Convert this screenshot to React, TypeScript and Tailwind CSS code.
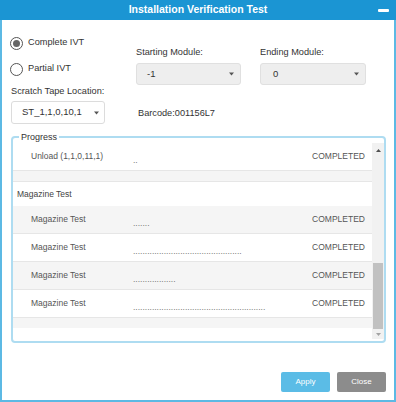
import React from "react";

const font = { fontFamily: '"Liberation Sans", Arial, sans-serif' };

function Caret({ color = "#555" }: { color?: string }) {
  return (
    <svg width="5" height="4" viewBox="0 0 5 4">
      <path d="M0 0.5 L5 0.5 L2.5 3.5 Z" fill={color} />
    </svg>
  );
}

function Radio({ checked, label }: { checked: boolean; label: string }) {
  return (
    <div className="flex h-[16px] items-center">
      <div className="ml-[-1px] flex h-[13px] w-[13px] items-center justify-center rounded-full border border-[#555] bg-white">
        {checked && <div className="h-[7px] w-[7px] rounded-full bg-[#666]" />}
      </div>
      <span className="ml-[5px] text-[9.2px] text-[#333]">{label}</span>
    </div>
  );
}

type Row = { label: string; dots: number; status: string; bg: string };

const rows: Row[] = [
  { label: "Magazine Test", dots: 7, status: "COMPLETED", bg: "bg-[#f5f5f5]" },
  { label: "Magazine Test", dots: 46, status: "COMPLETED", bg: "bg-white" },
  { label: "Magazine Test", dots: 18, status: "COMPLETED", bg: "bg-[#f5f5f5]" },
  { label: "Magazine Test", dots: 56, status: "COMPLETED", bg: "bg-white" },
];

function ProgressRow({ label, dots, status, bg }: Row) {
  return (
    <div className={`flex h-[28px] items-center border-b border-[#e6e6e6] pl-[18px] text-[8.5px] text-[#555] ${bg}`}>
      <span className="w-[102px] shrink-0">{label}</span>
      <span className="flex-1 translate-y-[4px] overflow-hidden whitespace-nowrap tracking-[0px] text-[#777]">
        {".".repeat(dots)}
      </span>
      <span className="w-[60px] shrink-0 pr-[7px] text-right">{status}</span>
    </div>
  );
}

export default function App() {
  return (
    <div className="flex h-[402px] w-[396px] flex-col bg-white" style={font}>
      <div className="relative flex h-[20px] shrink-0 items-center justify-center bg-[#1b95d3]">
        <span className="text-[10.5px] font-bold text-white">Installation Verification Test</span>
        <div className="absolute right-[7px] top-[9px] h-[3px] w-[11px] rounded-[1px] bg-white" />
      </div>
      <div className="flex flex-1 flex-col border-x-2 border-b-2 border-[#5cb9e4] pl-[9px] pr-[8px]">
        <div className="flex h-[111px] shrink-0">
          <div className="flex w-[125px] shrink-0 flex-col pt-[15px]">
            <Radio checked label="Complete IVT" />
            <div className="mt-[10px]">
              <Radio checked={false} label="Partial IVT" />
            </div>
            <div className="mt-[7px] h-[14px] text-[9.2px] leading-[14px] text-[#333]">Scratch Tape Location:</div>
            <div className="mt-[3px] flex h-[23px] w-[94px] items-center justify-between rounded-[3px] border border-[#dcdcdc] bg-white pl-[10px] pr-[5px] text-[9.5px] text-[#333]">
              <span>ST_1,1,0,10,1</span>
              <Caret />
            </div>
          </div>
          <div className="flex flex-col pt-[25px]">
            <div className="flex gap-[19px]">
              <div className="flex flex-col">
                <div className="h-[14px] text-[9.2px] leading-[14px] text-[#333]">Starting Module:</div>
                <div className="mt-[4px] flex h-[22px] w-[105px] items-center justify-between rounded-[3px] border border-[#e0e0e0] bg-[#eeeeee] pl-[10px] pr-[6px] text-[9.5px] text-[#333]">
                  <span>-1</span>
                  <Caret />
                </div>
              </div>
              <div className="flex flex-col">
                <div className="h-[14px] text-[9.2px] leading-[14px] text-[#333]">Ending Module:</div>
                <div className="mt-[4px] flex h-[22px] w-[106px] items-center justify-between rounded-[3px] border border-[#e0e0e0] bg-[#eeeeee] pl-[12px] pr-[6px] text-[9.5px] text-[#333]">
                  <span>0</span>
                  <Caret />
                </div>
              </div>
            </div>
            <div className="ml-[2px] mt-[21px] h-[14px] text-[9.2px] leading-[14px] text-[#333]">Barcode:001156L7</div>
          </div>
        </div>

        <fieldset className="h-[212px] w-[375px] shrink-0 rounded-[4px] border-2 border-[#aedcf1]">
          <legend className="ml-[6px] px-[2px] text-[9px] leading-[12px] text-[#333]">Progress</legend>
          <div className="flex h-[196px]">
            <div className="flex flex-1 flex-col overflow-hidden">
              <div className="flex h-[28px] items-center border-b border-[#e6e6e6] bg-white pl-[18px] text-[8.5px] text-[#555]">
                <span className="w-[102px] shrink-0">Unload (1,1,0,11,1)</span>
                <span className="flex-1 translate-y-[4px] text-[#777]">..</span>
                <span className="w-[60px] shrink-0 pr-[7px] text-right">COMPLETED</span>
              </div>
              <div className="h-[11px] border-b border-[#e6e6e6] bg-[#f5f5f5]" />
              <div className="flex h-[24px] items-center bg-white pl-[4px] text-[8.5px] text-[#444]">Magazine Test</div>
              {rows.map((r, i) => (
                <ProgressRow key={i} {...r} />
              ))}
              <div className="h-[10px] bg-[#f5f5f5]" />
            </div>
            <div className="flex w-[12px] shrink-0 flex-col bg-[#f1f1f1]">
              <div className="flex h-[14px] items-center justify-center">
                <svg width="5" height="3" viewBox="0 0 5 3">
                  <path d="M0 3 L5 3 L2.5 0 Z" fill="#505050" />
                </svg>
              </div>
              <div className="h-[106px]" />
              <div className="mx-[1px] h-[66px] bg-[#c1c1c1]" />
              <div className="flex h-[10px] items-center justify-center">
                <svg width="5" height="3" viewBox="0 0 5 3">
                  <path d="M0 0 L5 0 L2.5 3 Z" fill="#a3a3a3" />
                </svg>
              </div>
            </div>
          </div>
        </fieldset>

        <div className="mt-[29px] flex justify-end gap-[7px]">
          <button className="h-[20px] w-[49px] rounded-[2px] bg-[#5bbce6] text-[8px] text-white">Apply</button>
          <button className="h-[20px] w-[49px] rounded-[2px] bg-[#8c8c8c] text-[8px] text-white">Close</button>
        </div>
      </div>
    </div>
  );
}
